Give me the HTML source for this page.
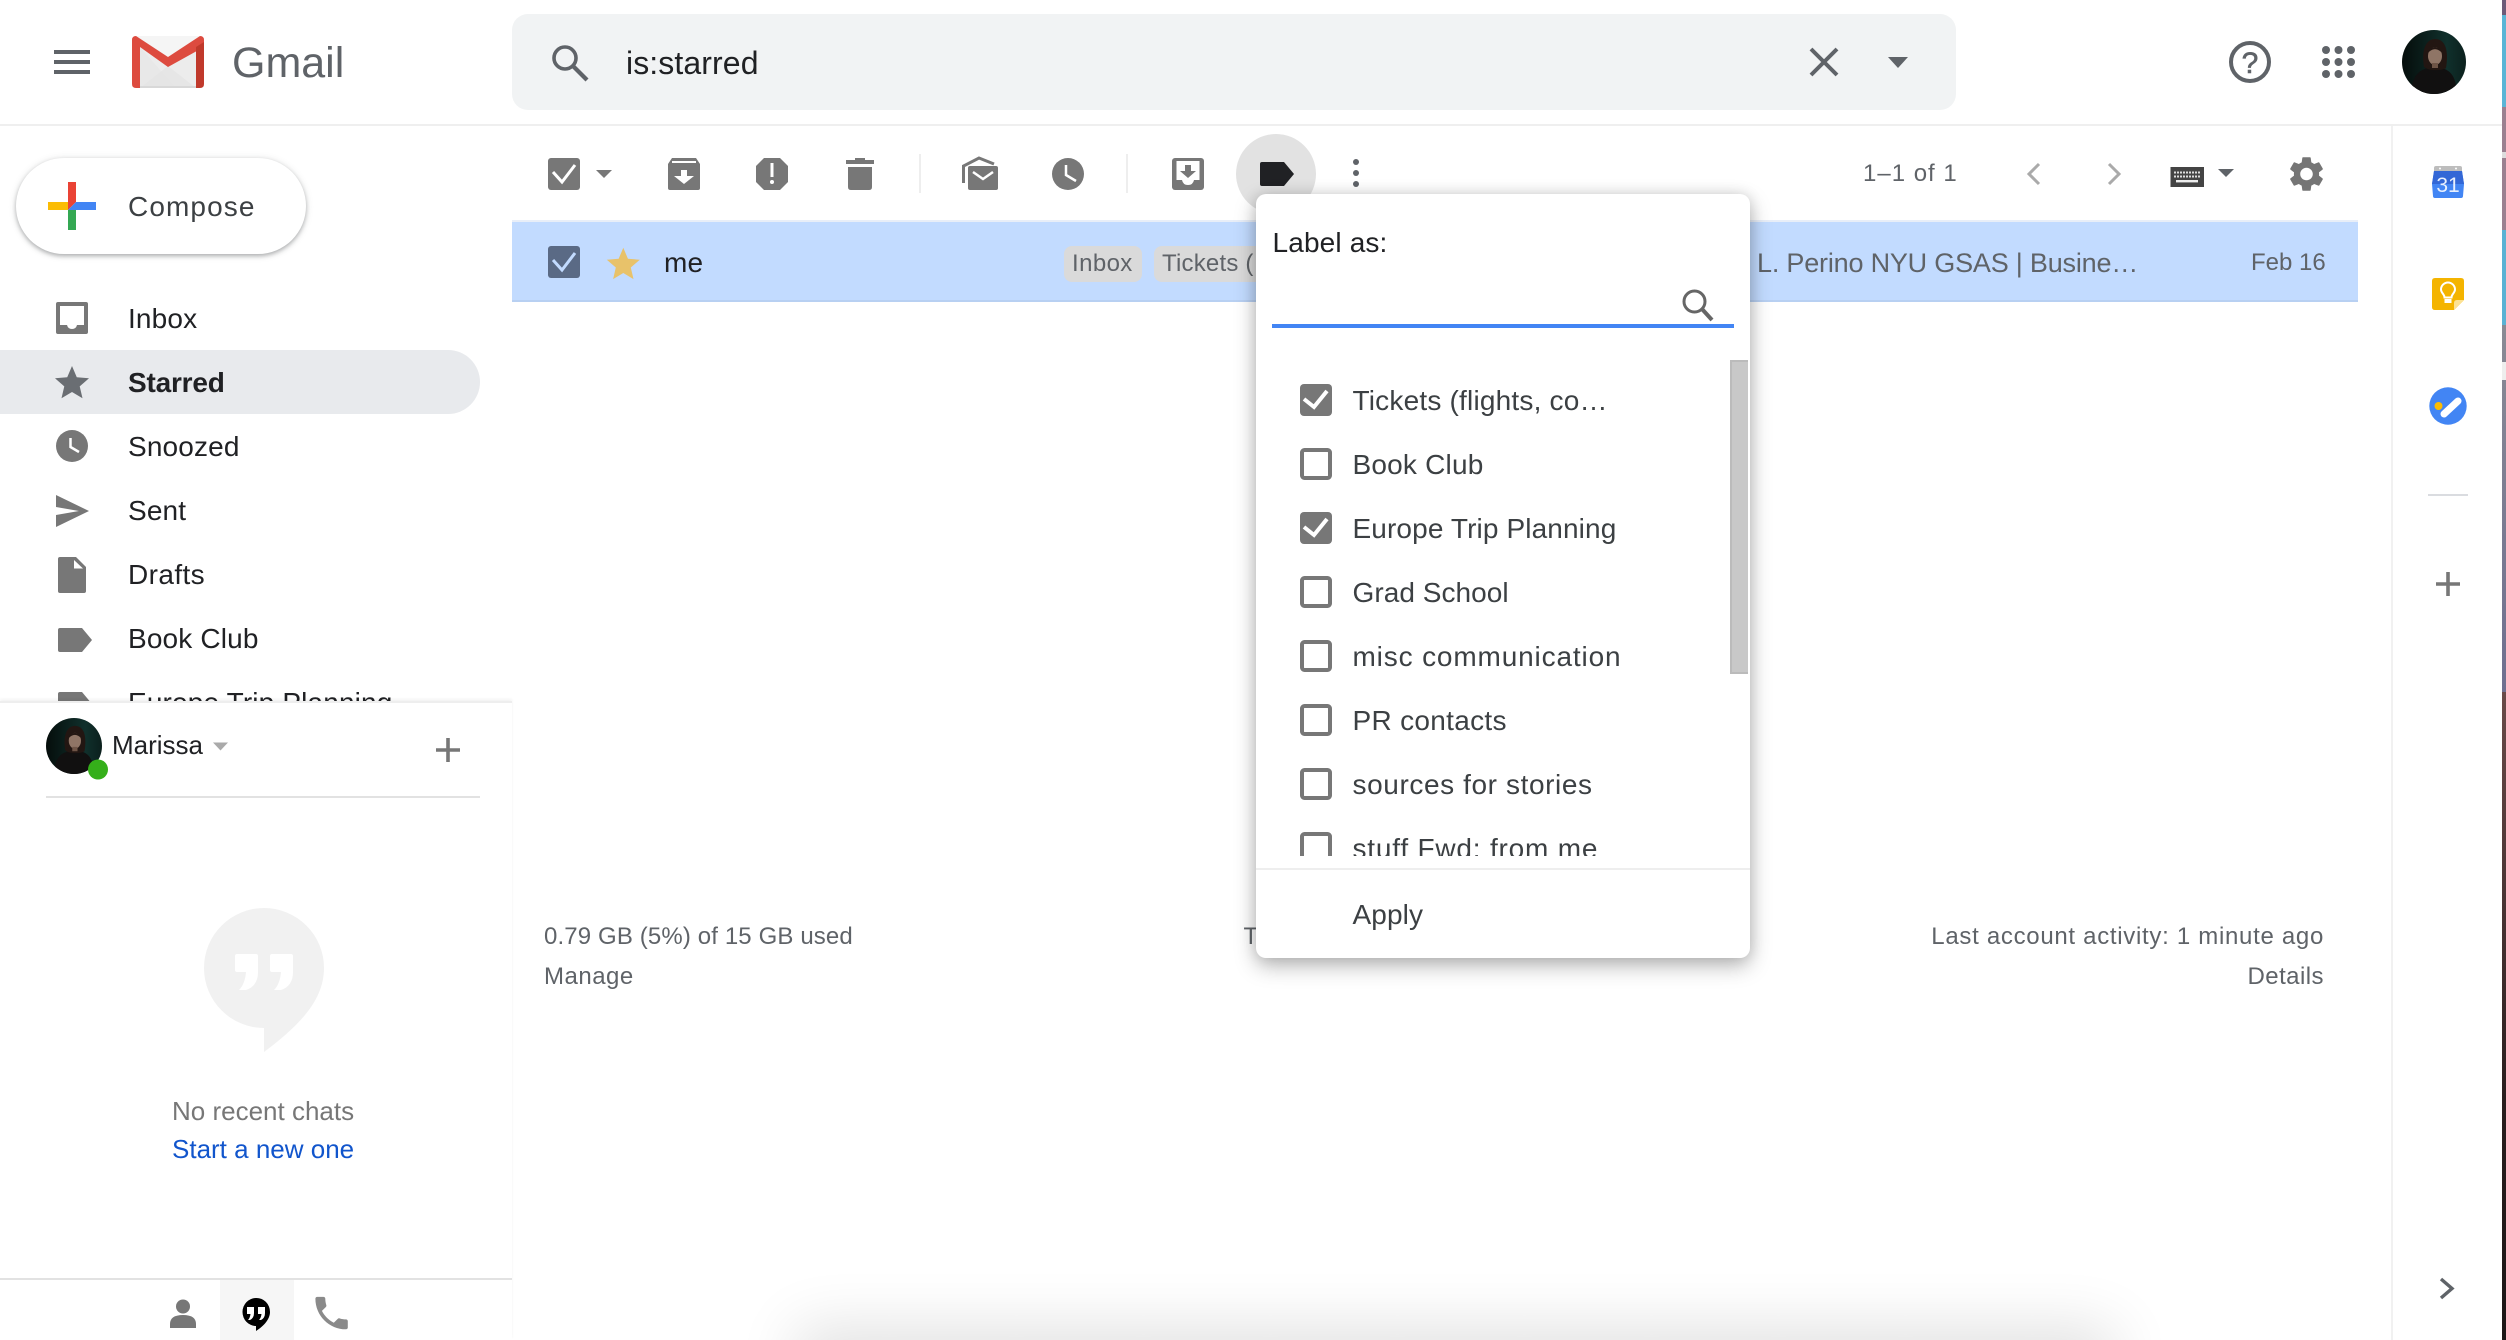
<!DOCTYPE html>
<html lang="en">
<head>
<meta charset="utf-8">
<title>Gmail</title>
<style>
html,body{margin:0;padding:0;background:#fff;width:2506px;height:1340px;overflow:hidden;}
body{font-family:"Liberation Sans",Arial,sans-serif;color:#202124;}
#w{position:absolute;left:0;top:0;width:2506px;height:1340px;overflow:hidden;}
.t{position:absolute;white-space:nowrap;line-height:40px;height:40px;}
.n{left:128px;font-size:28px;color:#202124;letter-spacing:.15px;}
.g{font-size:24px;color:#5f6368;}
.b{position:absolute;}
svg{position:absolute;left:0;top:0;overflow:visible;}
.l{left:96.5px;font-size:28px;color:#3c4043;}
</style>
</head>
<body>
<div id="w">
<!-- Desktop strip at right -->
<div class="b" style="left:2502px;top:0;width:4px;height:1340px;background:linear-gradient(180deg,#6d5a78 0,#6d5a78 15px,#5ab5d6 15px,#5ab5d6 107px,#9b8090 107px,#9b8090 230px,#5ab2d4 230px,#5ab2d4 325px,#8a8a94 325px,#6f6f90 692px,#6a4a48 692px,#4a3434 900px,#2a1e1e 1100px,#1c1616 1340px);"></div>
<div class="b" style="left:2502px;top:152px;width:4px;height:6px;background:#ddd;"></div>
<div class="b" style="left:2502px;top:362px;width:4px;height:18px;background:#eee;"></div>

<!-- Search box -->
<div class="b" style="left:512px;top:14px;width:1444px;height:96px;background:#f1f3f4;border-radius:16px;"></div>
<!-- Header rule -->
<div class="b" style="left:0;top:124px;width:2502px;height:2px;background:#efefef;"></div>
<!-- Right side rule -->
<div class="b" style="left:2391px;top:126px;width:2px;height:1214px;background:#f1f1f1;"></div>
<!-- Row -->
<div class="b" style="left:512px;top:220px;width:1846px;height:2px;background:#e8eef8;"></div>
<div class="b" style="left:512px;top:222px;width:1846px;height:80px;background:#c2dbff;box-sizing:border-box;border-bottom:2px solid #b8d0f2;"></div>
<div class="b" style="left:1064px;top:246px;width:78px;height:36px;background:#dadada;border-radius:8px;"></div>
<div class="b" style="left:1154px;top:246px;width:130px;height:36px;background:#dadada;border-radius:8px;"></div>
<!-- Starred nav -->
<div class="b" style="left:0;top:350px;width:480px;height:64px;background:#e8eaed;border-radius:0 32px 32px 0;"></div>
<!-- Label button circle -->
<div class="b" style="left:1236px;top:134px;width:80px;height:80px;background:#e2e2e2;border-radius:50%;"></div>
<!-- Compose -->
<div class="b" style="left:16px;top:158px;width:290px;height:96px;background:#fff;border-radius:48px;box-shadow:0 2px 4px rgba(60,64,67,.35),0 1px 8px rgba(60,64,67,.15);"></div>
<!-- Bottom shadow -->
<div class="b" style="left:810px;top:1345px;width:1290px;height:40px;box-shadow:0 -4px 60px 14px rgba(0,0,0,.12);"></div>

<svg width="2506" height="1340" viewBox="0 0 2506 1340" xmlns="http://www.w3.org/2000/svg">
<defs>
<clipPath id="ac"><circle cx="32" cy="32" r="32"/></clipPath>
<linearGradient id="ag" x1="0" x2="1" y1="0" y2="0"><stop offset="0" stop-color="#050d0b"/><stop offset=".7" stop-color="#10302c"/><stop offset="1" stop-color="#0b201d"/></linearGradient>
<symbol id="av" viewBox="0 0 64 64" overflow="visible">
<g clip-path="url(#ac)">
<rect width="64" height="64" fill="url(#ag)"/>
<path d="M9 64 C10 44 18 38 33 37 C47 38 54 44 55 64Z" fill="#111010"/>
<path d="M22 37 C19 20 24 9 33 9 C43 9 47 20 44 38 C40 41 26 41 22 37Z" fill="#221612"/>
<ellipse cx="33" cy="26" rx="7" ry="9" fill="#8f7566"/>
<path d="M26 23 C27 15 39 15 40 23 C36 18 30 18 26 23Z" fill="#221612"/>
<rect x="30" y="33" width="6" height="5" fill="#6f5547"/>
</g>
</symbol>
</defs>

<!-- Hamburger -->
<g fill="#5f6368"><rect x="54" y="50" width="36" height="4"/><rect x="54" y="60" width="36" height="4"/><rect x="54" y="70" width="36" height="4"/></g>

<!-- Gmail logo -->
<rect x="134" y="36" width="68" height="52" rx="3" fill="#ececec"/>
<path d="M136 36H200L168 58Z" fill="#f5f5f5"/>
<path d="M140 88L168 66L196 88Z" fill="#e6e6e6"/>
<path d="M140 47L176 88H140Z" fill="#e2e2e2" opacity=".35"/>
<rect x="140" y="86" width="56" height="2" fill="#d8d8d8"/>
<path d="M132 40Q132 36 136 36L168 57L200 36Q204 36 204 40V47L168 67L140 47V88H136Q132 88 132 84Z" fill="#dd4b3f"/>
<path d="M204 42V84Q204 88 200 88H196V47Z" fill="#c0392b"/>

<!-- Compose plus -->
<path d="M68 182H76V202L68 210Z" fill="#ea4335"/>
<path d="M76 202H96V210H68Z" fill="#4285f4"/>
<path d="M68 210H76V230H68Z" fill="#34a853"/>
<path d="M48 202H68V210H48Z" fill="#fbbc04"/>

<!-- Nav icons -->
<path d="M58 302H86Q88 302 88 304V332Q88 334 86 334H58Q56 334 56 332V304Q56 302 58 302ZM60 306V325H67Q68 329 72 329Q76 329 77 325H84V306Z" fill="#777" fill-rule="evenodd"/>
<path transform="translate(51.6 362.6) scale(1.7)" d="M12 17.27L18.18 21l-1.64-7.03L22 9.24l-7.19-.61L12 2 9.19 8.63 2 9.24l5.46 4.73L5.82 21z" fill="#6a6e73"/>
<circle cx="72" cy="446" r="16" fill="#777"/>
<path d="M70.5 438V447L79 452" fill="none" stroke="#fff" stroke-width="2.5"/>
<path d="M56 495L89 511L56 527V515L79 511L56 507Z" fill="#777"/>
<path d="M60 557H76L86 567V591Q86 593 84 593H60Q58 593 58 591V559Q58 557 60 557Z" fill="#777"/>
<path d="M74 560L83 568.5H74Z" fill="#fff"/>
<path d="M60 628H82L92 640L82 652H60Q58 652 58 650V630Q58 628 60 628Z" fill="#777"/>
<path d="M60 692H82L92 704L82 716H60Q58 716 58 714V694Q58 692 60 692Z" fill="#777"/>

<!-- Search icons -->
<circle cx="565" cy="58" r="11" fill="none" stroke="#5f6368" stroke-width="3.6"/>
<path d="M573 66L587 80" stroke="#5f6368" stroke-width="4.2" fill="none"/>
<path d="M1811 49L1837 75M1837 49L1811 75" stroke="#5f6368" stroke-width="4" fill="none"/>
<path d="M1888 57H1908L1898 68Z" fill="#5f6368"/>

<!-- Help / apps -->
<circle cx="2250" cy="62" r="19" fill="none" stroke="#5f6368" stroke-width="4"/>
<text x="2250" y="73" font-family="Liberation Sans,sans-serif" font-size="30" stroke="#5f6368" stroke-width=".6" fill="#5f6368" text-anchor="middle">?</text>
<g fill="#5f6368">
<circle cx="2326" cy="50" r="4"/><circle cx="2338.5" cy="50" r="4"/><circle cx="2351" cy="50" r="4"/>
<circle cx="2326" cy="62" r="4"/><circle cx="2338.5" cy="62" r="4"/><circle cx="2351" cy="62" r="4"/>
<circle cx="2326" cy="74" r="4"/><circle cx="2338.5" cy="74" r="4"/><circle cx="2351" cy="74" r="4"/>
</g>
<use href="#av" x="2402" y="30" width="64" height="64"/>

<!-- Toolbar -->
<rect x="548" y="158" width="32" height="32" rx="3" fill="#777"/>
<path d="M553 172L562 182L575 165" fill="none" stroke="#fff" stroke-width="3"/>
<path d="M596 170H612L604 178Z" fill="#777"/>
<path d="M672 158H696L700 164V188Q700 190 698 190H670Q668 190 668 188V164Z" fill="#777"/>
<rect x="672" y="161" width="24" height="2" fill="#fff"/>
<path d="M681 170H687V176H694L684 184L674 176H681Z" fill="#fff"/>
<path d="M764 158H780L788 166V182L780 190H764L756 182V166Z" fill="#777"/>
<rect x="770.5" y="163" width="3" height="14" fill="#fff"/><circle cx="772" cy="182" r="2" fill="#fff"/>
<path d="M855 158H865V160H874V164H846V160H855Z" fill="#777"/>
<path d="M848 167H872V187Q872 190 869 190H851Q848 190 848 187Z" fill="#777"/>
<rect x="919" y="154" width="2" height="39" fill="#eee"/>
<path d="M963.5 183V166L979 158L994 164" fill="none" stroke="#777" stroke-width="3"/>
<rect x="968" y="166" width="30" height="24" rx="2" fill="#777"/>
<path d="M973 172L983 179L993 172" fill="none" stroke="#fff" stroke-width="2.5"/>
<circle cx="1068" cy="174" r="16" fill="#777"/>
<path d="M1066 165V175L1076 181" fill="none" stroke="#fff" stroke-width="2.5"/>
<rect x="1126" y="154" width="2" height="39" fill="#eee"/>
<rect x="1172" y="158" width="32" height="32" rx="3" fill="#777"/>
<path d="M1176.5 161H1199.5V180H1194Q1193 185 1188 185Q1183 185 1182 180H1176.5Z" fill="#fff"/>
<path d="M1185 165H1191V171H1196L1188 178L1180 171H1185Z" fill="#777"/>
<path d="M1262 162H1284L1294 174L1284 186H1262Q1260 186 1260 184V164Q1260 162 1262 162Z" fill="#202124"/>
<g fill="#5f6368"><circle cx="1356" cy="162" r="3"/><circle cx="1356" cy="173" r="3"/><circle cx="1356" cy="184" r="3"/></g>
<path d="M2039 164L2029 174L2039 184" fill="none" stroke="#aaa" stroke-width="3"/>
<path d="M2109 164L2119 174L2109 184" fill="none" stroke="#aaa" stroke-width="3"/>
<rect x="2170.5" y="167" width="33.5" height="20" fill="#444"/>
<path d="M2174 172.5H2201M2174 176.5H2201" stroke="#ddd" stroke-width="2" stroke-dasharray="2 1"/>
<rect x="2176" y="180" width="22" height="2.4" fill="#eee"/>
<path d="M2218 169H2234L2226 177Z" fill="#5f6368"/>
<path transform="translate(2285.5 153) scale(1.75)" fill="#757575" d="M19.14 12.94c.04-.3.06-.61.06-.94 0-.32-.02-.64-.07-.94l2.03-1.58c.18-.14.23-.41.12-.61l-1.92-3.32c-.12-.22-.37-.29-.59-.22l-2.39.96c-.5-.38-1.03-.7-1.62-.94l-.36-2.54c-.04-.24-.24-.41-.48-.41h-3.84c-.24 0-.43.17-.47.41l-.36 2.54c-.59.24-1.13.57-1.62.94l-2.39-.96c-.22-.08-.47 0-.59.22L2.74 8.87c-.12.21-.08.47.12.61l2.03 1.58c-.05.3-.09.63-.09.94s.02.64.07.94l-2.03 1.58c-.18.14-.23.41-.12.61l1.92 3.32c.12.22.37.29.59.22l2.39-.96c.5.38 1.03.7 1.62.94l.36 2.54c.05.24.24.41.48.41h3.84c.24 0 .44-.17.47-.41l.36-2.54c.59-.24 1.13-.56 1.62-.94l2.39.96c.22.08.47 0 .59-.22l1.92-3.32c.12-.22.07-.47-.12-.61l-2.01-1.58zM12 15.6c-1.98 0-3.6-1.62-3.6-3.6s1.62-3.6 3.6-3.6 3.6 1.62 3.6 3.6-1.62 3.6-3.6 3.6z"/>

<!-- Row icons -->
<rect x="548" y="246" width="32" height="32" rx="3" fill="#5a6a85"/>
<path d="M553 260L562 270L575 253" fill="none" stroke="#c2dbff" stroke-width="3"/>
<path transform="translate(603.5 244.5) scale(1.65)" d="M12 17.27L18.18 21l-1.64-7.03L22 9.24l-7.19-.61L12 2 9.19 8.63 2 9.24l5.46 4.73L5.82 21z" fill="#e8c26a"/>

<!-- Side icons -->
<rect x="2434" y="166" width="28" height="8" rx="2" fill="#bdbdbd"/>
<circle cx="2440" cy="168.5" r="1" fill="#fff"/><circle cx="2456" cy="168.5" r="1" fill="#fff"/>
<path d="M2434 171H2462L2464 184L2463 196Q2463 198 2461 198H2435Q2433 198 2433 196L2432 184Z" fill="#4285f4"/>
<path d="M2434 171H2462L2464 184H2432Z" fill="#3367d6"/>
<text x="2448" y="192" font-family="Liberation Sans,sans-serif" font-size="21" fill="#e8f0fe" text-anchor="middle">31</text>
<path d="M2435 278H2461Q2464 278 2464 281V300L2454 310H2435Q2432 310 2432 307V281Q2432 278 2435 278Z" fill="#f4b400"/>
<path d="M2464 300L2454 310V303Q2454 300 2457 300Z" fill="#fde293"/>
<path d="M2444.5 297.5C2444.5 294 2441 293 2441 289.5A7 7 0 0 1 2455 289.5C2455 293 2451.5 294 2451.5 297.5Z" fill="none" stroke="#fff" stroke-width="2"/>
<rect x="2444.5" y="299" width="7" height="4" fill="#fff"/>
<circle cx="2448" cy="406" r="18.7" fill="#4285f4"/>
<path d="M2444 414L2458 401" stroke="#fff" stroke-width="7" stroke-linecap="round" fill="none"/>
<circle cx="2438.5" cy="406" r="4" fill="#fbbc04"/>
<rect x="2428" y="494" width="40" height="2" fill="#dadce0"/>
<path d="M2436 584H2460M2448 572V596" stroke="#777" stroke-width="3.6" fill="none"/>
<path d="M2441 1279L2452 1288.5L2441 1298" fill="none" stroke="#5f6368" stroke-width="3.4"/>
</svg>

<!-- Text in main -->
<div class="t" style="left:232px;top:43px;font-size:43px;color:#5f6368;">Gmail</div>
<div class="t" style="left:626px;top:43px;font-size:32px;color:#202124;letter-spacing:.1px;">is:starred</div>
<div class="t" style="left:128px;top:187px;font-size:28px;color:#3c4043;letter-spacing:1.1px;">Compose</div>
<div class="t n" style="top:299px;">Inbox</div>
<div class="t n" style="top:363px;font-weight:bold;letter-spacing:-.2px;">Starred</div>
<div class="t n" style="top:427px;">Snoozed</div>
<div class="t n" style="top:491px;">Sent</div>
<div class="t n" style="top:555px;letter-spacing:.4px;">Drafts</div>
<div class="t n" style="top:619px;">Book Club</div>
<div class="t n" style="top:683px;">Europe Trip Planning</div>

<div class="t g" style="left:1863px;top:154px;letter-spacing:1px;">1–1 of 1</div>
<div class="t" style="left:664px;top:243px;font-size:28px;color:#202124;letter-spacing:.2px;">me</div>
<div class="t g" style="left:1072px;top:244px;letter-spacing:.4px;">Inbox</div>
<div class="t g" style="left:1162px;top:244px;letter-spacing:.2px;">Tickets (</div>
<div class="t" style="left:1757px;top:243px;font-size:27px;color:#5f6368;letter-spacing:-.2px;">L. Perino NYU GSAS | Busine…</div>
<div class="t g" style="left:2251px;top:243px;">Feb 16</div>

<div class="t g" style="left:544px;top:917px;letter-spacing:.13px;">0.79 GB (5%) of 15 GB used</div>
<div class="t g" style="left:544px;top:957px;letter-spacing:.5px;">Manage</div>
<div class="t g" style="left:1243.5px;top:917px;">T</div>
<div class="t g" style="right:182px;top:917px;letter-spacing:.7px;">Last account activity: 1 minute ago</div>
<div class="t g" style="right:182px;top:957px;letter-spacing:.45px;">Details</div>

<!-- Chat panel -->
<div class="b" style="left:0;top:701px;width:512px;height:639px;background:#fff;border-top:2px solid #eee;box-shadow:0 -2px 3px rgba(0,0,0,.05);box-sizing:border-box;"></div>
<div class="t" style="left:112px;top:725px;font-size:26px;color:#202124;">Marissa</div>
<div class="t" style="left:172px;top:1091px;font-size:26px;color:#777;">No recent chats</div>
<div class="t" style="left:172px;top:1129px;font-size:26px;color:#1155cc;">Start a new one</div>
<div class="b" style="left:46px;top:796px;width:434px;height:2px;background:#e2e2e2;"></div>
<div class="b" style="left:0;top:1278px;width:512px;height:2px;background:#e2e2e2;"></div>
<div class="b" style="left:220px;top:1280px;width:74px;height:60px;background:#f6f6f6;"></div>
<svg width="2506" height="1340" viewBox="0 0 2506 1340" xmlns="http://www.w3.org/2000/svg">
<use href="#av" x="46" y="718" width="56" height="56"/>
<circle cx="98" cy="769.5" r="10" fill="#35af1a"/>
<path d="M213 742.500H228L220.500 750.500Z" fill="#aaa"/>
<path d="M436 750H460M448 738V762" stroke="#777" stroke-width="3.6" fill="none"/>
<g>
<path d="M264 908A60 60 0 0 0 264 1028V1052C300 1025 324 1000 324 968A60 60 0 0 0 264 908Z" fill="#f1f1f1"/>
<g fill="#fff">
<path d="M235 956q0-2 2-2h19q2 0 2 2v16q0 14-12 18h-7q6-6 7-18h-9q-2 0-2-2z"/>
<path d="M270 956q0-2 2-2h19q2 0 2 2v16q0 14-12 18h-7q6-6 7-18h-9q-2 0-2-2z"/>
</g>
</g>
<g fill="#777"><ellipse cx="183" cy="1306.5" rx="7" ry="7"/><path d="M170 1328V1324Q170 1315 183 1315Q196 1315 196 1324V1328Z"/></g>
<path d="M256 1298A13.5 14 0 0 0 256 1326V1331C264 1326 270 1319 270 1312A13.5 14 0 0 0 256 1298Z" fill="#000"/>
<g fill="#fff"><path d="M247 1307h7v6q0 5-4 7h-2q2-2 2.5-6h-3.5z"/><path d="M258 1307h7v6q0 5-4 7h-2q2-2 2.5-6h-3.5z"/></g>
<path transform="translate(310 1291.5) scale(1.8)" fill="#8a8a8a" d="M6.62 10.79c1.44 2.83 3.76 5.14 6.59 6.59l2.2-2.2c.27-.27.67-.36 1.02-.24 1.12.37 2.33.57 3.57.57.55 0 1 .45 1 1V20c0 .55-.45 1-1 1-9.39 0-17-7.61-17-17 0-.55.45-1 1-1h3.5c.55 0 1 .45 1 1 0 1.25.2 2.45.57 3.57.11.35.03.74-.25 1.02l-2.2 2.2z"/>
</svg>

<!-- Dialog -->
<div class="b" style="left:1256px;top:194px;width:494px;height:764px;background:#fff;border-radius:10px;box-shadow:0 8px 22px rgba(0,0,0,.28),0 0 14px rgba(0,0,0,.12);">
  <div class="t" style="left:16.5px;top:29px;font-size:28px;color:#202124;letter-spacing:.15px;">Label as:</div>
  <div class="b" style="left:16px;top:130px;width:462px;height:4px;background:#4285f4;"></div>
  <svg width="494" height="764" viewBox="1256 194 494 764" xmlns="http://www.w3.org/2000/svg">
    <circle cx="1694.5" cy="301.5" r="10.5" fill="none" stroke="#666" stroke-width="3"/>
    <path d="M1702 309L1712 320" stroke="#666" stroke-width="4" fill="none"/>
  </svg>
  <div class="b" style="left:474px;top:166px;width:18px;height:314px;background:#c8c8c8;box-sizing:border-box;border-top:2px solid #bbb;border-left:2px solid #bbb;border-bottom:2px solid #bbb;"></div>
  <div class="b" style="left:0;top:166px;width:470px;height:496px;overflow:hidden;">
    <svg width="470" height="496" viewBox="1256 360 470 496" xmlns="http://www.w3.org/2000/svg">
      <rect x="1300" y="384" width="32" height="32" rx="4" fill="#777"/>
      <path d="M1304 399L1314 407L1327 391" fill="none" stroke="#fff" stroke-width="4"/>
      <rect x="1302" y="450" width="28" height="28" rx="2.5" fill="none" stroke="#777" stroke-width="4"/>
      <rect x="1300" y="512" width="32" height="32" rx="4" fill="#777"/>
      <path d="M1304 527L1314 535L1327 519" fill="none" stroke="#fff" stroke-width="4"/>
      <rect x="1302" y="578" width="28" height="28" rx="2.5" fill="none" stroke="#777" stroke-width="4"/>
      <rect x="1302" y="642" width="28" height="28" rx="2.5" fill="none" stroke="#777" stroke-width="4"/>
      <rect x="1302" y="706" width="28" height="28" rx="2.5" fill="none" stroke="#777" stroke-width="4"/>
      <rect x="1302" y="770" width="28" height="28" rx="2.5" fill="none" stroke="#777" stroke-width="4"/>
      <rect x="1302" y="834" width="28" height="28" rx="2.5" fill="none" stroke="#777" stroke-width="4"/>
    </svg>
    <div class="t l" style="top:21px;letter-spacing:.2px;">Tickets (flights, co…</div>
    <div class="t l" style="top:85px;letter-spacing:.2px;">Book Club</div>
    <div class="t l" style="top:149px;letter-spacing:.12px;">Europe Trip Planning</div>
    <div class="t l" style="top:213px;letter-spacing:.05px;">Grad School</div>
    <div class="t l" style="top:277px;letter-spacing:.85px;">misc communication</div>
    <div class="t l" style="top:341px;letter-spacing:.3px;">PR contacts</div>
    <div class="t l" style="top:405px;letter-spacing:.6px;">sources for stories</div>
    <div class="t l" style="top:469px;letter-spacing:.8px;">stuff Fwd: from me</div>
  </div>
  <div class="b" style="left:0;top:674px;width:494px;height:2px;background:#eee;"></div>
  <div class="t l" style="top:701px;letter-spacing:.1px;">Apply</div>
</div>
</div>
</body>
</html>
